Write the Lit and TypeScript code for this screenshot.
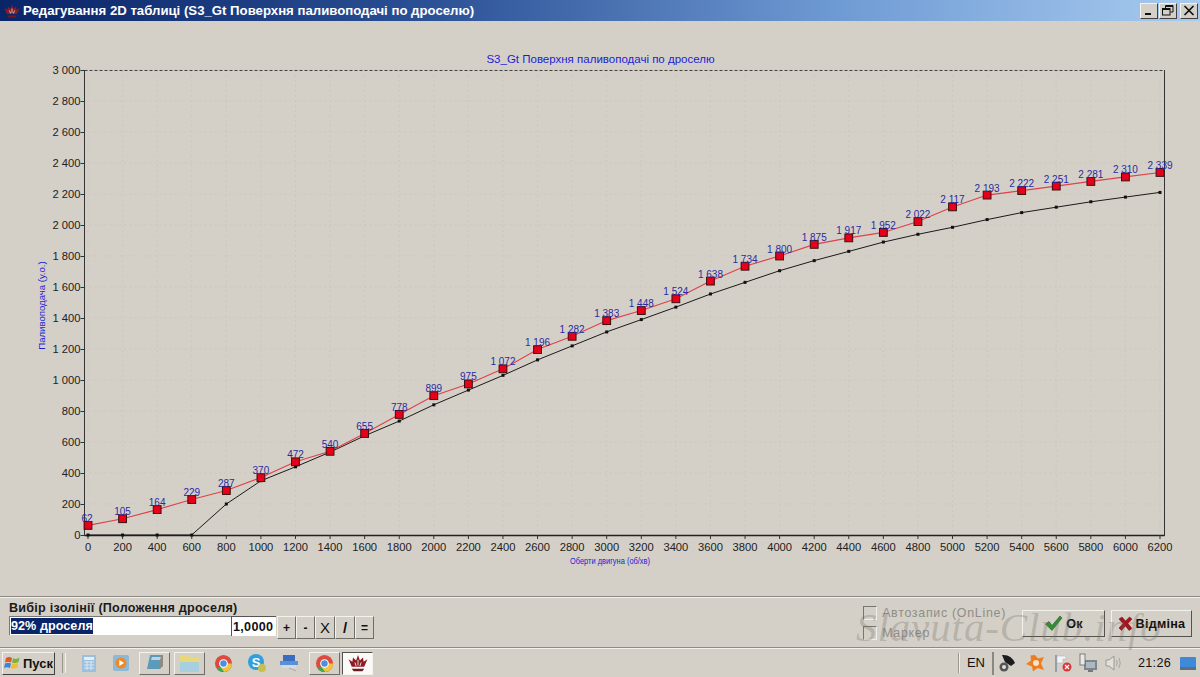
import { LitElement, html, css, svg } from "lit";
import { customElement } from "lit/decorators.js";

const RED = [62,105,164,229,287,370,472,540,655,778,899,975,1072,1196,1282,1383,1448,1524,1638,1734,1800,1875,1917,1952,2022,2117,2193,2222,2251,2281,2310,2339];
const BLK = [0,0,0,0,200,350,440,535,640,735,840,935,1030,1130,1220,1310,1390,1470,1555,1630,1705,1770,1830,1890,1940,1985,2035,2080,2115,2150,2180,2210];
const TOP = 70 - 21;
const BOT = 535 - 21;
const L = 84.5, R = 1164.5;
const X = (i: number) => 88 + (i * 1072) / 31;
const Y = (v: number) => BOT - (v * (BOT - TOP)) / 3000;
const fmt = (v: number) => {
  const s = String(v);
  return s.length > 3 ? s.slice(0, -3) + " " + s.slice(-3) : s;
};
const yTicks = Array.from({ length: 16 }, (_, i) => i * 200);

const crown = (s: number) => html`<svg width=${s} height=${s} viewBox="0 0 16 16">
  <path d="M8 1.5 L9.5 6 L12 3.5 L12.5 7 L15.5 5 L13 11 L3 11 L0.5 5 L3.5 7 L4 3.5 L6.5 6 Z" fill="#8c1c22"/>
  <path d="M3 12.5 H13 L11.5 14.5 H4.5 Z" fill="#6d1a20"/>
  <path d="M8 5.5V10M5.5 7.5L6.5 10.5M10.5 7.5L9.5 10.5" stroke="#e9d6d6" stroke-width=".8"/>
</svg>`;

const chrome = html`<svg width="19" height="19" viewBox="0 0 20 20">
  <circle cx="10" cy="10" r="9" fill="#dd4b3e"/>
  <path d="M10 10 L17.8 14.5 A9 9 0 0 1 3 15.6 Z" fill="#3aa757"/>
  <path d="M10 10 L19 10 A9 9 0 0 1 10.8 19 L7 14 Z" fill="#f5c33b"/>
  <circle cx="10" cy="10" r="4.6" fill="#fff"/>
  <circle cx="10" cy="10" r="3.4" fill="#4a8fe0"/>
</svg>`;

@customElement("app-root")
export class AppRoot extends LitElement {
  static styles = css`
    :host { display: flex; flex-direction: column; width: 1200px; height: 677px; background: #d4d0c8; overflow: hidden; position: relative; font-family: "Liberation Sans", Arial, sans-serif; color: #111; }
    .title { height: 21px; flex: none; display: flex; align-items: center; gap: 3px; padding: 0 2px 0 4px; background: linear-gradient(90deg, #0a2468 0%, #2a4f94 35%, #6f9bd4 70%, #a8cbef 100%); box-sizing: border-box; }
    .ttext { flex: 1; color: #fff; font-weight: 700; font-size: 13.2px; white-space: nowrap; }
    .crown { width: 16px; height: 16px; display: flex; }
    .wbtns { display: flex; }
    .wbtn { width: 18px; height: 16px; margin-left: 1px; box-sizing: border-box; background: #d4d0c8; border: 1px solid; border-color: #f4f2ec #404040 #404040 #f4f2ec; display: flex; align-items: center; justify-content: center; }
    .wbtn.x { margin-left: 3px; }
    .chart { flex: none; height: 575px; display: block; }
    svg.plot { display: block; }
    .axis { font-size: 11.2px; fill: #222; }
    .blue { fill: #1c1cd8; font-size: 11.5px; }
    .xt { font-size: 8.6px; }
    .yt { font-size: 9.6px; }
    .val { fill: #2a2aa0; font-size: 10px; }
    .panel { flex: none; height: 52px; box-sizing: border-box; border-top: 1px solid #8c8a84; border-bottom: 1px solid #8c8a84; box-shadow: inset 0 1px 0 #f4f2ec; display: flex; justify-content: space-between; padding: 4px 8px 0 9px; }
    .left { display: flex; flex-direction: column; }
    .lbl { font-size: 12.6px; font-weight: 700; letter-spacing: .24px; line-height: 14px; color: #1a1a1a; }
    .row { display: flex; align-items: flex-start; margin-top: 1px; }
    .combo { width: 222px; height: 19px; background: #fff; display: flex; align-items: center; padding-left: 1px; box-sizing: border-box; border-top: 1px solid #777; border-left: 1px solid #777; font-size: 12.6px; font-weight: 700; letter-spacing: .05px; }
    .sel { background: #0a246a; color: #fff; padding: 1px 0; line-height: 14px; }
    .num { width: 45px; height: 20px; box-sizing: border-box; background: #fff; border-top: 1px solid #555; border-left: 1px solid #555; font-size: 12.6px; font-weight: 700; letter-spacing: .3px; display: flex; align-items: center; padding-left: 1px; margin-right: 1px; }
    .calc { width: 19px; height: 23px; box-sizing: border-box; background: #d4d0c8; border: 1px solid; border-color: #f4f2ec #6e6c66 #6e6c66 #f4f2ec; display: flex; align-items: center; justify-content: center; font-weight: 700; font-size: 12px; }
    .calc.w { width: 20px; font-size: 15px; font-weight: 400; }
    .right { display: flex; align-items: flex-start; }
    .checks { display: flex; flex-direction: column; gap: 6px; padding-top: 5px; margin-right: 16px; }
    .chk { display: flex; align-items: center; gap: 5px; font-size: 12.4px; color: #8f8d87; letter-spacing: .72px; line-height: 13px; }
    .box { width: 14px; height: 14px; box-sizing: border-box; border: 1px solid; border-color: #77756f #f0eee8 #f0eee8 #77756f; }
    .btn { height: 27px; box-sizing: border-box; background: #d4d0c8; border: 1px solid; border-color: #f4f2ec #55534e #55534e #f4f2ec; display: flex; align-items: center; justify-content: center; gap: 3px; font-size: 12.6px; font-weight: 700; margin-top: 9px; letter-spacing: .25px; }
    .ok { width: 83px; margin-right: 6px; }
    .no { width: 81px; }
    .task { flex: none; height: 29px; box-sizing: border-box; display: flex; align-items: center; padding: 1px 0 0 2px; box-shadow: inset 0 1px 0 #f4f2ec; }
    .start { width: 53px; height: 23px; box-sizing: border-box; border: 1px solid; border-color: #f4f2ec #404040 #404040 #f4f2ec; display: flex; align-items: center; justify-content: center; gap: 2px; font-size: 13px; font-weight: 700; }
    .grip { width: 2px; height: 20px; margin: 0 7px 0 7px; border-left: 1px solid #99968f; border-right: 1px solid #f4f2ec; }
    .ti { width: 32px; height: 24px; display: flex; align-items: center; justify-content: center; box-sizing: border-box; flex: none; }
    .ti.up { border: 1px solid; border-color: #f4f2ec #6e6c66 #6e6c66 #f4f2ec; height: 23px; width: 31px; margin: 0 2px; }
    .ti.act { background: #fbfaf8; border: 1px solid; border-color: #55534e #f4f2ec #f4f2ec #55534e; height: 23px; width: 31px; }
    .m2 { margin-left: 2px; }
    .ti.up.m4 { margin-left: 4px; }
    .sp { flex: 1; }
    .lang { font-size: 13px; padding: 0 7px 0 8px; height: 20px; line-height: 20px; border-left: 1px solid #99968f; box-shadow: inset 1px 0 0 #f4f2ec; }
    .tray { height: 23px; box-sizing: border-box; width: 208px; display: flex; align-items: center; border-left: 2px solid #8a8882; padding-left: 4px; }
    .tray svg { flex: none; }
    .s6 { margin-left: 6px; }
    .s7 { margin-left: 7px; }
    .s9 { margin-left: 9px; }
    .clock { font-size: 12.6px; letter-spacing: .3px; margin: 0 9px 0 15px; }
    .wm { position: absolute; left: 856px; top: 602px; font-family: "Liberation Serif", serif; font-style: italic; font-size: 41px; letter-spacing: .9px; color: rgba(110, 108, 100, .3); white-space: nowrap; pointer-events: none; line-height: 50px; }
  `;

  private plot() {
    const ln = (a: number[]) => a.map((v, i) => `${X(i).toFixed(1)},${Y(v).toFixed(1)}`).join(" ");
    return html`<svg class="plot" width="1200" height="575" viewBox="0 0 1200 575">
      ${svg`
      <text class="blue" x="600.5" y="42" text-anchor="middle">S3_Gt Поверхня паливоподачі по дроселю</text>
      ${yTicks.slice(1).map((v) => svg`<line x1=${L} x2=${R} y1=${Y(v)} y2=${Y(v)} stroke="#cac7bf" stroke-dasharray="2 3"/>`)}
      ${RED.map((_, i) => svg`<line x1=${X(i)} x2=${X(i)} y1=${TOP} y2=${BOT} stroke="#cac7bf" stroke-dasharray="2 3"/>`)}
      <line x1=${L} x2=${R} y1=${TOP + 0.5} y2=${TOP + 0.5} stroke="#444" stroke-dasharray="3 2"/>
      <line x1=${L} x2=${R} y1=${BOT + 0.5} y2=${BOT + 0.5} stroke="#222" stroke-width="1.5"/>
      <line x1=${L} x2=${L} y1=${TOP} y2=${BOT + 1} stroke="#333"/>
      <line x1=${R} x2=${R} y1=${TOP} y2=${BOT + 1} stroke="#333"/>
      ${yTicks.map((v) => svg`
        <line x1=${L - 4} x2=${L} y1=${Y(v) + 0.5} y2=${Y(v) + 0.5} stroke="#333"/>
        <text class="axis" x=${L - 4} y=${Y(v) + 3.5} text-anchor="end">${fmt(v)}</text>`)}
      ${RED.map((_, i) => svg`
        <line x1=${X(i)} x2=${X(i)} y1=${BOT} y2=${BOT + 4} stroke="#333"/>
        <text class="axis" x=${X(i)} y=${BOT + 15.5} text-anchor="middle">${i * 200}</text>`)}
      <text class="blue xt" x="610" y=${BOT + 29} text-anchor="middle" textLength="80" lengthAdjust="spacingAndGlyphs">Оберти двигуна (об/хв)</text>
      <text class="blue yt" transform="translate(45 ${(TOP + BOT) / 2 + 3}) rotate(-90)" text-anchor="middle">Паливоподача (у.о.)</text>
      <polyline points=${ln(BLK)} fill="none" stroke="#1a1a1a" stroke-width="1"/>
      ${BLK.map((v, i) => svg`<rect x=${X(i) - 1.5} y=${Y(v) - 1.5} width="3" height="3" fill="#111"/>`)}
      <polyline points=${ln(RED)} fill="none" stroke="#e0404a" stroke-width="1.1"/>
      ${RED.map((v, i) => svg`<rect x=${X(i) - 3.9} y=${Y(v) - 3.9} width="7.8" height="7.8" fill="#e8001a" stroke="#3a1010" stroke-width="1"/>`)}
      ${RED.map((v, i) => svg`<text class="val" x=${X(i) - (i === 0 ? 1 : 0)} y=${Y(v) - 3.5} text-anchor="middle">${fmt(v)}</text>`)}
      `}
    </svg>`;
  }

  render() {
    return html`
      <div class="title">
        <span class="crown">${crown(16)}</span>
        <span class="ttext">Редагування 2D таблиці (S3_Gt Поверхня паливоподачі по дроселю)</span>
        <div class="wbtns">
          <div class="wbtn"><svg width="12" height="10" viewBox="0 0 12 10"><rect x="2" y="7" width="6" height="2" fill="#111"/></svg></div>
          <div class="wbtn"><svg width="12" height="11" viewBox="0 0 12 11"><path d="M3.5 3V.5H11V7H8.5M3.5 1.5H11" fill="none" stroke="#111"/><rect x=".5" y="3.5" width="7.5" height="6.5" fill="none" stroke="#111"/><path d="M.5 4.5H8" stroke="#111"/></svg></div>
          <div class="wbtn x"><svg width="12" height="11" viewBox="0 0 12 11"><path d="M1.5 1L10.5 10M10.5 1L1.5 10" stroke="#111" stroke-width="1.7"/></svg></div>
        </div>
      </div>
      <div class="chart">${this.plot()}</div>
      <div class="panel">
        <div class="left">
          <div class="lbl">Вибір ізолінії (Положення дроселя)</div>
          <div class="row">
            <div class="combo"><span class="sel">92% дроселя</span></div>
            <div class="num">1,0000</div>
            <div class="calc">+</div><div class="calc">-</div><div class="calc w">X</div><div class="calc w"><b>/</b></div><div class="calc">=</div>
          </div>
        </div>
        <div class="right">
          <div class="checks">
            <div class="chk"><span class="box"></span>Автозапис (OnLine)</div>
            <div class="chk"><span class="box"></span>Маркер</div>
          </div>
          <div class="btn ok"><svg width="19" height="17" viewBox="0 0 19 17"><path d="M1.5 9L5 6.5L8 10.5L16 1L18 3L8 15.5Z" fill="#2f8f32" stroke="#1d5f20" stroke-width=".6"/></svg>Ок</div>
          <div class="btn no"><svg width="15" height="15" viewBox="0 0 15 15"><path d="M1 3L4 1L7.5 5L11.5 1L14 3L10 7.5L14 12.5L11 14.5L7.5 10L3.5 14.5L1 12L5 7.5Z" fill="#a5151c" stroke="#6d0d12" stroke-width=".5"/></svg>Відміна</div>
        </div>
      </div>
      <div class="task">
        <div class="start">
          <svg width="17" height="16" viewBox="0 0 17 16"><path d="M2 3Q5 1 8 3L7 7.5Q4 6 1 7.5Z" fill="#e2562a"/><path d="M9 3Q12 5 15.5 2.5L14.5 7Q11 9 8 7.5Z" fill="#7ab33d"/><path d="M1 8.5Q4 7 7 8.5L6 13Q3 11.5 0 13Z" fill="#3b85d6"/><path d="M8 8.5Q11 10 14 8L13.5 12.5Q10 14.5 7 13Z" fill="#f0bd2c"/></svg>Пуск
        </div>
        <div class="grip"></div>
        <div class="ti"><svg width="14" height="17" viewBox="0 0 14 17"><rect width="14" height="17" fill="#9cc0dc"/><rect x="2" y="2" width="10" height="3" fill="#e3eef6"/><path d="M2 7h10M2 10h10M2 13h10M5 6v9M9 6v9" stroke="#d9e8f2"/></svg></div>
        <div class="ti"><svg width="16" height="16" viewBox="0 0 16 16"><rect width="16" height="16" rx="2" fill="#8db9d8"/><circle cx="8" cy="8" r="5.5" fill="#ea8a2a"/><path d="M6.3 5v6L11 8Z" fill="#fff"/></svg></div>
        <div class="ti up"><svg width="20" height="18" viewBox="0 0 20 18"><path d="M5 1H18L15 15H2Z" fill="#5d9ab8"/><path d="M15 2L18 1V12L15 15Z" fill="#8b8a84"/><path d="M7 3H16L15 6H6Z" fill="#b7d7e6"/></svg></div>
        <div class="ti up"><svg width="21" height="19" viewBox="0 0 21 19"><path d="M1 5H20V18H1Z" fill="#a8cfdf"/><path d="M1 1H9L11 4H20V8H1Z" fill="#e7d87a"/></svg></div>
        <div class="ti">${chrome}</div>
        <div class="ti m2"><svg width="20" height="20" viewBox="0 0 20 20"><circle cx="9" cy="9" r="8" fill="#2f9fe0"/><text x="9" y="13.5" text-anchor="middle" font-size="13" font-weight="700" fill="#fff" font-family="Liberation Sans">S</text><circle cx="15" cy="15" r="4" fill="#c9bf4e"/></svg></div>
        <div class="ti"><svg width="20" height="18" viewBox="0 0 20 18"><rect x="4" y="1" width="12" height="6" fill="#3a6cc0"/><rect x="1" y="7" width="18" height="4" fill="#5d8fd6"/><rect x="3" y="11" width="14" height="3" fill="#cfdbe8"/><path d="M10 14l7 3" stroke="#aab"/></svg></div>
        <div class="ti up m4">${chrome}</div>
        <div class="ti act">${crown(20)}</div>
        <div class="sp"></div>
        <div class="lang">EN</div>
        <div class="tray">
          <svg width="20" height="20" viewBox="0 0 20 20"><path d="M4 2Q13 1 17 10L13 13L7 9Z" fill="#1c1c1c"/><circle cx="6" cy="14" r="4.5" fill="#555"/><circle cx="6" cy="14" r="2" fill="#ddd"/></svg>
          <svg class="s7" width="20" height="18" viewBox="0 0 20 18"><path d="M10 1L13 4.5L19 3L16 9.5L19 16L12.5 14L8 17.5L7 12.5L1 10L6 6.5L5.5 1.5Z" fill="#ee7d22"/><circle cx="11" cy="9" r="3" fill="#f8e3c8"/></svg>
          <svg class="s9" width="19" height="19" viewBox="0 0 19 19"><path d="M2 1V18" stroke="#7a8ea4" stroke-width="1.5"/><path d="M3 2H11L13 5H9L9 9H3Z" fill="#f3f3f3" stroke="#aaa" stroke-width=".5"/><circle cx="13" cy="13" r="4.5" fill="#d8383c"/><path d="M11 11l4 4M15 11l-4 4" stroke="#fff" stroke-width="1.2"/></svg>
          <svg class="s6" width="19" height="20" viewBox="0 0 19 20"><rect x="5" y="7" width="13" height="10" fill="#7b8790"/><rect x="7" y="9" width="9" height="6" fill="#aeb8be"/><rect x="1" y="1" width="5" height="11" fill="#e8e8e4" stroke="#666" stroke-width=".8"/><path d="M9 17v2h5v-2" fill="#777"/></svg>
          <svg class="s7" width="18" height="18" viewBox="0 0 18 18"><path d="M1 6H4L9 2V16L4 12H1Z" fill="#e2e0da" stroke="#9a9890"/><path d="M11.5 6Q13 9 11.5 12M14 4Q16.5 9 14 14" fill="none" stroke="#a7a59e"/></svg>
          <span class="clock">21:26</span>
          <svg width="16" height="13" viewBox="0 0 16 13"><rect width="16" height="13" rx="1" fill="#3e8ad8"/><rect y="10" width="16" height="3" fill="#5f6f80"/></svg>
        </div>
      </div>
      <div class="wm">Slavuta-Club.info</div>
    `;
  }
}
